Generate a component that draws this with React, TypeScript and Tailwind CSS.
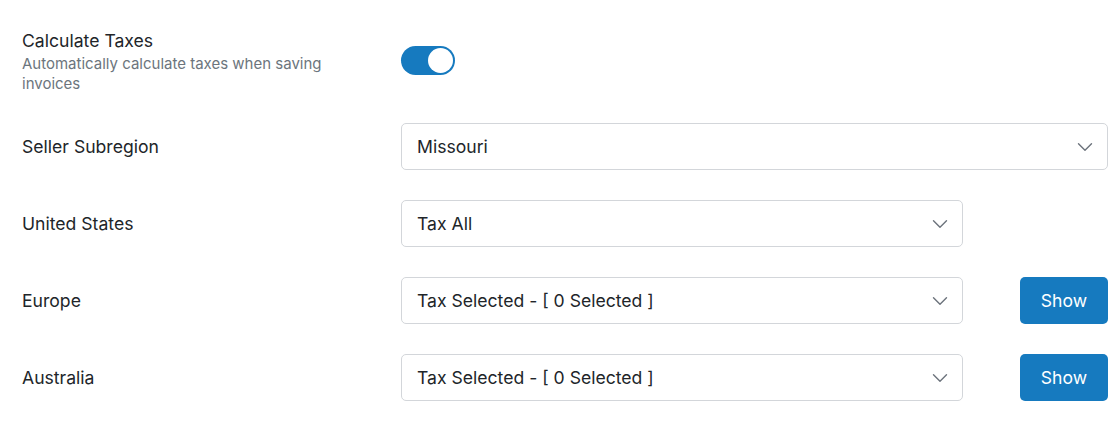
import { ChevronDown } from "lucide-react";

function Select({ value, className }: { value: string; className?: string }) {
  return (
    <div
      className={`flex h-[47px] items-center justify-between rounded-[5px] border border-[#d3d6da] bg-white pl-[15px] pr-[9px] pt-[1px] text-[17.6px] text-[#212529] ${className ?? ""}`}
    >
      <span>{value}</span>
      <ChevronDown className="h-[26px] w-[26px] text-[#6c737c]" strokeWidth={1.3} />
    </div>
  );
}

function Row({ label, children }: { label: string; children: React.ReactNode }) {
  return (
    <div className="flex items-center">
      <div className="w-[379px] shrink-0 pt-[1px] text-[17.6px] text-[#212529]">{label}</div>
      <div className="flex flex-1 items-center">{children}</div>
    </div>
  );
}

function ShowButton() {
  return (
    <button
      type="button"
      className="ml-auto flex h-[47px] w-[88px] items-center justify-center rounded-[5px] bg-[#167abf] pt-[1px] text-[17.6px] text-white"
    >
      Show
    </button>
  );
}

export default function App() {
  return (
    <div
      className="flex h-[429px] w-[1120px] flex-col gap-[30px] bg-white pl-[22px] pr-[12px] pt-[30px]"
      style={{ fontFamily: "Inter, 'Noto Sans', sans-serif" }}
    >
      <div className="-mb-px flex items-start">
        <div className="w-[379px] shrink-0 pt-[1px]">
          <div className="text-[17.6px] leading-[20px] text-[#212529]">Calculate Taxes</div>
          <div className="mt-[3px] max-w-[335px] text-[15px] leading-[20px] text-[#6c757d]">
            Automatically calculate taxes when saving invoices
          </div>
        </div>
        <div className="mt-[16px] flex h-[29px] w-[54px] items-center justify-end rounded-full bg-[#167abf] px-[2px]">
          <div className="h-[25px] w-[25px] rounded-full bg-white" />
        </div>
      </div>

      <Row label="Seller Subregion">
        <Select value="Missouri" className="flex-1" />
      </Row>
      <Row label="United States">
        <Select value="Tax All" className="w-[562px]" />
      </Row>
      <Row label="Europe">
        <Select value="Tax Selected - [ 0 Selected ]" className="w-[562px]" />
        <ShowButton />
      </Row>
      <Row label="Australia">
        <Select value="Tax Selected - [ 0 Selected ]" className="w-[562px]" />
        <ShowButton />
      </Row>
    </div>
  );
}
